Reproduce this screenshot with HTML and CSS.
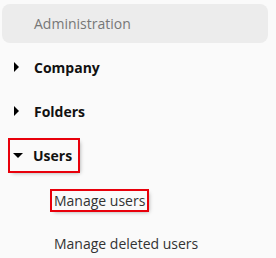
FILE: index.html
```html
<!DOCTYPE html>
<html>
<head>
<meta charset="utf-8">
<link rel="stylesheet" href="styles.css">
</head>
<body>
<nav class="menu">
  <div class="header">Administration</div>
  <div class="item"><span class="caret right"></span><span class="label">Company</span></div>
  <div class="item"><span class="caret right"></span><span class="label">Folders</span></div>
  <div class="item"><span class="hl users"><span class="caret down"></span><span class="label">Users</span></span></div>
  <div class="sub first"><span class="hl">Manage users</span></div>
  <div class="sub"><span>Manage deleted users</span></div>
</nav>
</body>
</html>
```
FILE: styles.css
```css
html, body {
  margin: 0;
  padding: 0;
  background: #fafafa;
}
body {
  width: 276px;
  height: 258px;
  overflow: hidden;
  font-family: "Open Sans", "DejaVu Sans", sans-serif;
  font-size: 14px;
}
.menu {
  display: flex;
  flex-direction: column;
  padding: 4px 8px 0 2px;
}
.header {
  height: 39px;
  background: #ececec;
  border-radius: 8px;
  color: #777;
  display: flex;
  align-items: center;
  padding-left: 32px;
  margin-bottom: 2px;
}
.item {
  height: 44px;
  display: flex;
  align-items: center;
  padding-left: 12px;
  font-weight: 700;
  color: #111;
}
.caret {
  width: 0;
  height: 0;
  display: inline-block;
  margin-right: 15px;
}
.caret.right {
  border-top: 5px solid transparent;
  border-bottom: 5px solid transparent;
  border-left: 5px solid #000;
}
.caret.down {
  border-left: 5px solid transparent;
  border-right: 5px solid transparent;
  border-top: 5px solid #000;
  margin-right: 10px;
}
.hl {
  display: inline-flex;
  align-items: center;
  outline: 2px solid #e8000b;
  box-shadow: 2px 2px 4px rgba(0,0,0,0.35);
}
.users {
  margin-left: -4px;
  padding: 4px 6px 4px 3px;
  height: 23px;
}
.sub {
  height: 43px;
  display: flex;
  align-items: center;
  padding-left: 52px;
  color: #333;
}
.sub.first {
  margin-top: 2px;
}
.sub .hl {
  padding: 0 2px;
  line-height: 19px;
  margin-left: -2px;
}
```
